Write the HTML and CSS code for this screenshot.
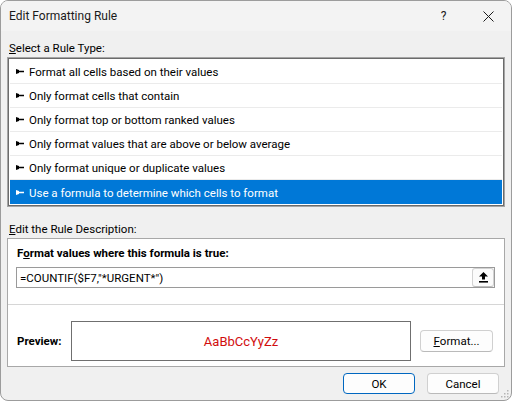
FILE: index.html
```html
<!DOCTYPE html>
<html lang="en">
<head>
<meta charset="utf-8">
<title>Edit Formatting Rule</title>
<link rel="stylesheet" href="styles.css">
</head>
<body>
<div class="window">
  <div class="titlebar">
    <span class="title">Edit Formatting Rule</span>
    <span class="tb-btn help">?</span>
    <span class="tb-btn close">
      <svg width="11" height="11" viewBox="0 0 11 11"><path d="M0.5 0.5 L10.5 10.5 M10.5 0.5 L0.5 10.5" stroke="#1b1b1b" stroke-width="1" fill="none"/></svg>
    </span>
  </div>
  <div class="content">
    <div class="label"><u>S</u>elect a Rule Type:</div>
    <ul class="rules">
      <li class="rule"><svg class="arrow" width="8" height="5" viewBox="0 0 8 5"><path d="M0 0 L3 0.9 L3 1.8 L8 1.8 L8 3.2 L3 3.2 L3 4.1 L0 5 Z"/></svg>Format all cells based on their values</li>
      <li class="rule"><svg class="arrow" width="8" height="5" viewBox="0 0 8 5"><path d="M0 0 L3 0.9 L3 1.8 L8 1.8 L8 3.2 L3 3.2 L3 4.1 L0 5 Z"/></svg>Only format cells that contain</li>
      <li class="rule"><svg class="arrow" width="8" height="5" viewBox="0 0 8 5"><path d="M0 0 L3 0.9 L3 1.8 L8 1.8 L8 3.2 L3 3.2 L3 4.1 L0 5 Z"/></svg>Only format top or bottom ranked values</li>
      <li class="rule"><svg class="arrow" width="8" height="5" viewBox="0 0 8 5"><path d="M0 0 L3 0.9 L3 1.8 L8 1.8 L8 3.2 L3 3.2 L3 4.1 L0 5 Z"/></svg>Only format values that are above or below average</li>
      <li class="rule"><svg class="arrow" width="8" height="5" viewBox="0 0 8 5"><path d="M0 0 L3 0.9 L3 1.8 L8 1.8 L8 3.2 L3 3.2 L3 4.1 L0 5 Z"/></svg>Only format unique or duplicate values</li>
      <li class="rule selected"><svg class="arrow" width="8" height="5" viewBox="0 0 8 5"><path d="M0 0 L3 0.9 L3 1.8 L8 1.8 L8 3.2 L3 3.2 L3 4.1 L0 5 Z"/></svg>Use a formula to determine which cells to format</li>
    </ul>
    <div class="label label-2"><u>E</u>dit the Rule Description:</div>
    <div class="desc">
      <div class="desc-top">
        <div class="bold formula-label">F<u>o</u>rmat values where this formula is true:</div>
        <div class="formula">
          <span class="formula-text">=COUNTIF($F7,"*URGENT*")</span>
          <span class="collapse">
            <svg width="9" height="11" viewBox="0 0 9 11"><path d="M4.5 0 L9 4.6 L6 4.6 L6 7.6 L3 7.6 L3 4.6 L0 4.6 Z" fill="#000"/><rect x="0" y="9" width="9" height="1.6" fill="#000"/></svg>
          </span>
        </div>
      </div>
      <div class="preview-row">
        <div class="bold preview-label">Preview:</div>
        <div class="preview-box">AaBbCcYyZz</div>
        <span class="btn format-btn"><u>F</u>ormat...</span>
      </div>
    </div>
    <div class="actions">
      <span class="btn default">OK</span>
      <span class="btn">Cancel</span>
    </div>
  </div>
  <svg class="grip" width="8" height="8" viewBox="0 0 8 8">
    <rect x="6" y="0" width="1.5" height="1.5"/>
    <rect x="3" y="3" width="1.5" height="1.5"/>
    <rect x="6" y="3" width="1.5" height="1.5"/>
    <rect x="0" y="6" width="1.5" height="1.5"/>
    <rect x="3" y="6" width="1.5" height="1.5"/>
    <rect x="6" y="6" width="1.5" height="1.5"/>
  </svg>
</div>
</body>
</html>
```
FILE: styles.css
```css
* { box-sizing: border-box; }
html, body { margin: 0; padding: 0; background: #ffffff; }
body {
  font-family: Roboto, "Segoe UI", "Noto Sans", sans-serif;
  font-size: 11.5px;
  color: #000;
}
u { text-decoration: underline; text-underline-offset: 1px; }

.window {
  width: 512px;
  height: 401px;
  border: 1px solid #9c9c9c;
  border-radius: 8px;
  background: #f0f0f0;
  overflow: hidden;
  display: flex;
  flex-direction: column;
  position: relative;
}

.titlebar {
  height: 30px;
  flex: none;
  display: flex;
  align-items: center;
  background: #f3f3f3;
}
.title { flex: 1; padding-left: 8px; font-size: 12px; color: #1a1a1a; }
.tb-btn {
  width: 45px;
  height: 30px;
  display: flex;
  align-items: center;
  justify-content: center;
}
.help { font-size: 12px; color: #1a1a1a; }

.content {
  padding: 9px 6px 0 6px;
  display: flex;
  flex-direction: column;
}
.label {
  height: 16px;
  line-height: 16px;
  padding-left: 2px;
  margin-bottom: 2px;
}
.label-2 { margin-top: 15px; margin-bottom: 1px; }

.rules {
  list-style: none;
  margin: 0 1px;
  padding: 1px;
  border: 1px solid #6b6b6b;
  box-shadow: 0 0 0 1px #a5a5a5;
  background: #fff;
}
.rule {
  height: 24px;
  display: flex;
  align-items: center;
  padding-left: 6px;
  padding-top: 1px;
  border-bottom: 1px solid #ebebeb;
}
.rule:last-child { border-bottom: none; }
.rule.selected { background: #0078d7; color: #fff; }
.arrow { fill: #000; margin-right: 5px; flex: none; margin-top: -1px; }
.selected .arrow { fill: #fff; }

.desc {
  border: 1px solid #a8a8a8;
  background: #fff;
}
.desc-top {
  padding: 6px 9px 16px 8px;
  border-bottom: 1px solid #d6d6d6;
}
.bold { font-weight: 700; }
.formula-label { height: 16px; line-height: 16px; padding-left: 1px; }
.formula {
  margin-top: 6px;
  height: 21px;
  border: 1px solid #9a9a9a;
  background: #fff;
  display: flex;
  align-items: center;
  padding-left: 3px;
}
.formula-text { flex: 1; }
.collapse {
  width: 22px;
  height: 19px;
  border: 1px solid #d2d2d2;
  border-bottom-color: #bdbdbd;
  border-radius: 3px;
  background: #fbfbfb;
  display: flex;
  align-items: center;
  justify-content: center;
}

.preview-row {
  display: flex;
  align-items: center;
  padding: 16px 0 5px 9px;
}
.preview-label { width: 54px; }
.preview-box {
  width: 340px;
  height: 40px;
  border: 1px solid #6f6f6f;
  display: flex;
  align-items: center;
  justify-content: center;
  color: #d10d0d;
  font-size: 13px;
}

.btn {
  display: flex;
  align-items: center;
  justify-content: center;
  height: 21px;
  width: 72px;
  border: 1px solid #d0d0d0;
  border-bottom-color: #bababa;
  border-radius: 4px;
  background: #fdfdfd;
  color: #000;
}
.format-btn { width: 73px; height: 22px; margin-left: 9px; }
.default { border-color: #0067c0; }

.actions {
  margin-top: 6px;
  display: flex;
  justify-content: flex-end;
  gap: 12px;
  padding-right: 6px;
}

.grip {
  position: absolute;
  right: 2px;
  bottom: 2px;
  fill: #b5b5b5;
}
```
